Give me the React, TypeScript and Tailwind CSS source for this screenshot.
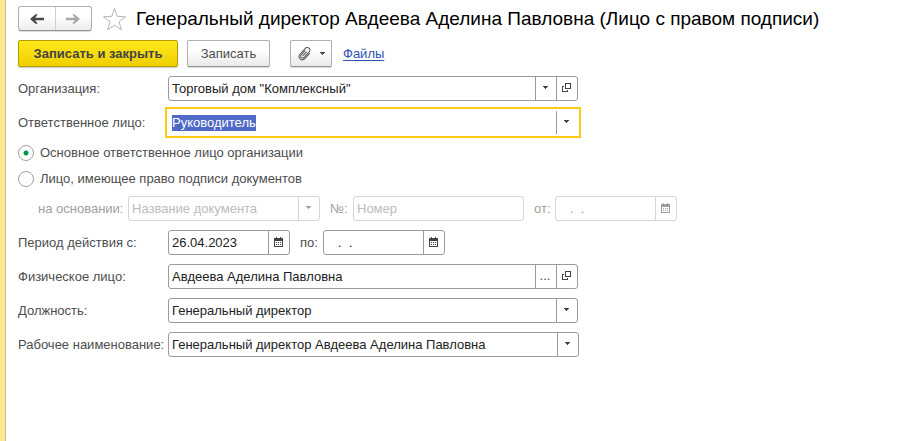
import { useEffect, useRef, useState } from 'react';
import type { ReactNode, Ref } from 'react';
import clsx from 'clsx';

function ArrowIcon({ className }: { className?: string }) {
  return (
    <svg viewBox="0 0 14 12" className={clsx('h-3 w-3.5', className)} fill="currentColor">
      <path d="M0 6 5.500 1.200h2.200L5.200 4.800H14v2.400H5.200l2.500 3.600H5.500Z" />
    </svg>
  );
}

function StarIcon() {
  return (
    <svg viewBox="0 0 24 24" className="h-6 w-6" fill="none" stroke="#b0b6bd" strokeWidth="1">
      <path d="M11.500 1.500 14.200 9.300 22.600 9.800 16 14.800 18.500 22.800 11.500 18.200 4.500 22.800 7 14.800.6 9.800 8.800 9.300Z" />
    </svg>
  );
}

function ClipIcon() {
  return (
    <svg viewBox="0 0 14 14" className="h-3.5 w-3.5" fill="none" stroke="#5a5a5a" strokeWidth="1" strokeLinecap="round">
      <path
        transform="rotate(42 7 7)"
        d="M4.800 4.500v5.700a1.900 1.900 0 0 0 3.800 0V2.600a2.600 2.600 0 0 0-5.200 0v8a3.300 3.300 0 0 0 6.600 0V3.500M6.700 4.500v5"
      />
    </svg>
  );
}

function CaretIcon() {
  return (
    <svg viewBox="0 0 5 3" className="h-[3px] w-[5px]" fill="currentColor" shapeRendering="crispEdges">
      <path d="M0 0h5v1H4v1H3v1H2V2H1V1H0Z" />
    </svg>
  );
}

function OpenIcon() {
  return (
    <svg viewBox="0 0 9 9" className="h-[9px] w-[9px]" fill="none" stroke="currentColor" shapeRendering="crispEdges">
      <path d="M3.500.5h5v5h-5ZM2 3.500H.5v5h5V7" />
    </svg>
  );
}

function CalendarIcon() {
  return (
    <svg viewBox="0 0 9 10" className="h-2.5 w-[9px]" fill="currentColor" shapeRendering="crispEdges">
      <path fillRule="evenodd" d="M0 1h2V0h1v1h3V0h1v1h2v9H0ZM1 4v5h7V4Z" />
      <path d="M2 5h1v1H2ZM4 5h1v1H4ZM6 5h1v1H6ZM2 7h1v1H2ZM4 7h1v1H4ZM6 7h1v1H6Z" />
    </svg>
  );
}

type FieldAction = { icon: ReactNode; label: string };

const choose: FieldAction = { icon: <CaretIcon />, label: 'Выбрать из списка' };
const open: FieldAction = { icon: <OpenIcon />, label: 'Открыть' };
const calendar: FieldAction = { icon: <CalendarIcon />, label: 'Выбрать дату' };
const more: FieldAction = { icon: '...', label: 'Показать все' };

interface FieldProps {
  id: string;
  value?: string;
  placeholder?: string;
  actions?: FieldAction[];
  disabled?: boolean;
  className?: string;
  inputRef?: Ref<HTMLInputElement>;
}

function Field({ id, value = '', placeholder, actions = [], disabled, className, inputRef }: FieldProps) {
  const [text, setText] = useState(value);

  return (
    <div
      className={clsx(
        'flex h-[25px] rounded-[3px] border bg-white focus-within:rounded-none focus-within:border-transparent focus-within:outline-2 focus-within:outline-offset-1 focus-within:outline-[#fdcb16]',
        disabled ? 'border-[#d5d5d5] text-[#a0a0a0]' : 'border-[#9b9b9b] text-[#444]',
        className
      )}
    >
      <input
        id={id}
        ref={inputRef}
        type="text"
        value={text}
        onChange={(e) => setText(e.target.value)}
        placeholder={placeholder}
        disabled={disabled}
        className="min-w-0 flex-1 bg-transparent px-[3px] whitespace-pre text-[#222] outline-none selection:bg-[#4f69c6] selection:text-white placeholder:text-[#bcbcbc] disabled:text-[#a0a0a0]"
      />
      {actions.map((action) => (
        <button
          key={action.label}
          type="button"
          aria-label={action.label}
          disabled={disabled}
          className={clsx(
            'flex w-[21px] shrink-0 items-center justify-center border-l pr-[2px] pb-[2px]',
            disabled ? 'border-[#d5d5d5]' : 'border-[#9b9b9b]'
          )}
        >
          {action.icon}
        </button>
      ))}
    </div>
  );
}

function Row({ id, label, children }: { id: string; label: string; children: ReactNode }) {
  return (
    <div className="flex items-center">
      <label htmlFor={id} className="w-[150px] shrink-0 whitespace-nowrap">
        {label}
      </label>
      {children}
    </div>
  );
}

const kinds = [
  { id: 'main', label: 'Основное ответственное лицо организации' },
  { id: 'signer', label: 'Лицо, имеющее право подписи документов' }
];

const toolButton =
  'flex h-[27px] items-center justify-center rounded-[2px] border border-[#b0b0b0] border-b-[#929292] bg-linear-to-b from-white from-40% to-[#e9e9e9] shadow-[0_1px_1px_#00000026]';

export default function App() {
  const [kind, setKind] = useState('main');
  const roleRef = useRef<HTMLInputElement>(null);

  // Курсор сразу в поле роли, значение выделено
  useEffect(() => {
    roleRef.current?.focus();
    roleRef.current?.select();
  }, []);

  return (
    <div className="min-h-screen border-l-[5px] border-[#fbe993] bg-white font-['Liberation_Sans',Arial,sans-serif] text-[13px] leading-4 text-[#4d4d4d]">
      <main className="min-h-screen border-l border-[#cfc07a] pt-1.5 pl-3">
        {/* Заголовок */}
        <header className="flex h-[25px] items-center">
          <div className="flex h-[25px] w-[74px] shrink-0 rounded-[3px] border border-[#b0b0b0] border-b-[#929292] bg-linear-to-b from-white from-40% to-[#ededed] shadow-[0_1px_1px_#00000026]">
            <button type="button" aria-label="Назад" className="flex flex-1 items-center justify-center border-r border-[#d0d0d0] text-[#4a4a4a]">
              <ArrowIcon />
            </button>
            <button type="button" aria-label="Вперед" className="flex flex-1 items-center justify-center text-[#a8a8a8]">
              <ArrowIcon className="rotate-180" />
            </button>
          </div>
          <button type="button" aria-label="Добавить в избранное" className="mr-[9px] ml-[11px] shrink-0">
            <StarIcon />
          </button>
          <h1 className="text-[19px] leading-6 whitespace-nowrap text-black">
            Генеральный директор Авдеева Аделина Павловна (Лицо с правом подписи)
          </h1>
        </header>

        {/* Команды формы */}
        <div className="mt-[9px] flex items-center">
          <button
            type="submit"
            form="signer-form"
            className="h-[27px] w-40 rounded-[2px] border border-[#b39d00] bg-linear-to-b from-[#ffe81a] to-[#efcf00] font-bold text-[#444] shadow-[0_1px_1px_#00000033]"
          >
            Записать и закрыть
          </button>
          <button type="button" className={clsx(toolButton, 'ml-[9px] w-[83px]')}>
            Записать
          </button>
          <button type="button" aria-label="Присоединенные файлы" className={clsx(toolButton, 'ml-5 w-[42px] gap-2')}>
            <ClipIcon />
            <CaretIcon />
          </button>
          <a href="#files" className="ml-[11px] text-[#2b55b5] underline underline-offset-2">
            Файлы
          </a>
        </div>

        {/* Реквизиты */}
        <form id="signer-form" onSubmit={(e) => e.preventDefault()} className="mt-[9px] flex flex-col gap-[9px]">
          <Row id="org" label="Организация:">
            <Field id="org" value={'Торговый дом "Комплексный"'} actions={[choose, open]} className="w-[410px]" />
          </Row>
          <Row id="role" label="Ответственное лицо:">
            <Field id="role" inputRef={roleRef} value="Руководитель" actions={[choose]} className="w-[410px]" />
          </Row>

          <div className="flex flex-col gap-[9px]">
            {kinds.map((item) => (
              <label key={item.id} className="flex h-[17px] items-center gap-[6px]">
                <input
                  type="radio"
                  name="kind"
                  checked={kind === item.id}
                  onChange={() => setKind(item.id)}
                  className="h-4 w-4 appearance-none rounded-full border border-[#a0a0a0] bg-white checked:bg-[radial-gradient(circle,#009646_2px,transparent_3px)]"
                />
                {item.label}
              </label>
            ))}
          </div>

          <div className="flex items-center pl-5 text-[#a0a0a0]">
            <label htmlFor="doc" className="w-[90px] whitespace-nowrap">на основании:</label>
            <Field id="doc" placeholder="Название документа" actions={[choose]} disabled className="w-48" />
            <label htmlFor="number" className="ml-2.5 w-[23px]">№:</label>
            <Field id="number" placeholder="Номер" disabled className="w-[171px]" />
            <label htmlFor="docDate" className="ml-2.5 w-[21px]">от:</label>
            <Field id="docDate" value="   .  ." actions={[calendar]} disabled className="w-[122px]" />
          </div>

          <Row id="from" label="Период действия с:">
            <Field id="from" value="26.04.2023" actions={[calendar]} className="w-[122px]" />
            <label htmlFor="to" className="ml-2.5 w-[23px]">по:</label>
            <Field id="to" value="   .  ." actions={[calendar]} className="w-[122px]" />
          </Row>
          <Row id="person" label="Физическое лицо:">
            <Field id="person" value="Авдеева Аделина Павловна" actions={[more, open]} className="w-[410px]" />
          </Row>
          <Row id="position" label="Должность:">
            <Field id="position" value="Генеральный директор" actions={[choose]} className="w-[410px]" />
          </Row>
          <Row id="title" label="Рабочее наименование:">
            <Field id="title" value="Генеральный директор Авдеева Аделина Павловна" actions={[choose]} className="w-[411px]" />
          </Row>
        </form>
      </main>
    </div>
  );
}
